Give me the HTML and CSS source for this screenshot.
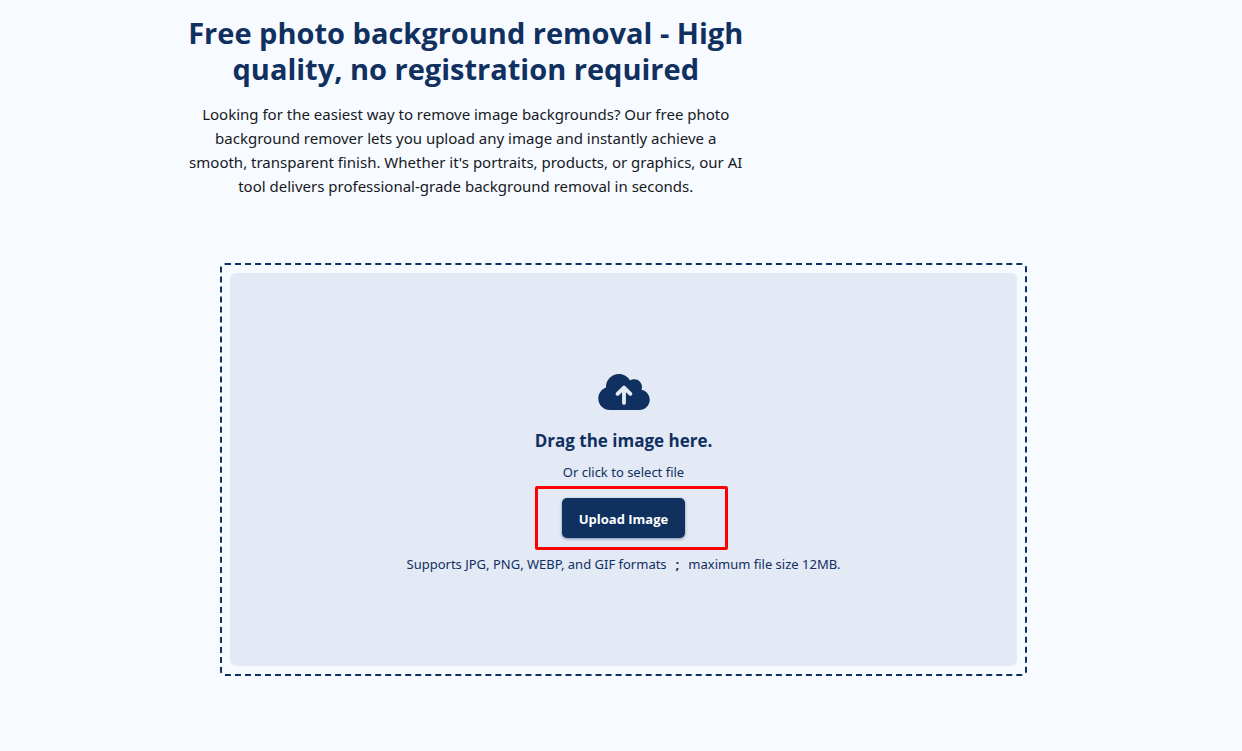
FILE: index.html
```html
<!DOCTYPE html>
<html lang="en">
<head>
    <meta charset="UTF-8">
    <meta name="viewport" content="width=device-width, initial-scale=1.0">
    <title>Free photo background removal</title>
    <link rel="stylesheet" href="styles.css">
</head>
<body>
    <header class="intro">
        <h1>Free photo background removal - High quality, no registration required</h1>
        <p>Looking for the easiest way to remove image backgrounds? Our free photo background remover lets you upload any image and instantly achieve a smooth, transparent finish. Whether it's portraits, products, or graphics, our AI tool delivers professional-grade background removal in seconds.</p>
    </header>

    <main class="upload">
        <div class="drop-border">
            <div class="drop-area">
                <svg class="cloud-icon" viewBox="0 32 640 448" aria-hidden="true">
                    <path fill="currentColor" d="M144 480C64.500 480 0 415.500 0 336c0-62.800 40.200-116.200 96.200-135.900c-.1-2.700-.2-5.400-.2-8.100c0-88.400 71.600-160 160-160c59.300 0 111 32.200 138.700 80.200C409.900 102 428.300 96 448 96c53 0 96 43 96 96c0 12.200-2.300 23.800-6.400 34.600C596 238.400 640 290.100 640 352c0 70.700-57.300 128-128 128H144zm79-217c-9.400 9.400-9.400 24.600 0 33.900s24.600 9.400 33.900 0l39-39V392c0 13.300 10.700 24 24 24s24-10.700 24-24V257.900l39 39c9.400 9.400 24.600 9.400 33.900 0s9.400-24.600 0-33.900l-80-80c-9.400-9.400-24.600-9.400-33.900 0l-80 80z"/>
                </svg>
                <h2>Drag the image here.</h2>
                <p class="hint">Or click to select file</p>
                <div class="button-row">
                    <button type="button" class="upload-button">Upload Image</button>
                    <span class="highlight"></span>
                </div>
                <p class="formats">Supports JPG, PNG, WEBP, and GIF formats<b>;</b>maximum file size 12MB.</p>
            </div>
        </div>
    </main>
</body>
</html>
```
FILE: styles.css
```css
* {
    box-sizing: border-box;
}

body {
    margin: 0;
    background-color: #f7faff;
    color: #16191d;
    font-family: "Segoe UI", "Open Sans", "Noto Sans", sans-serif;
}

h1, h2, p {
    margin: 0;
}

.intro {
    width: 45%;
    margin-left: 15%;
    padding-top: 15px;
    text-align: center;
}

.intro h1 {
    color: #10305f;
    font-size: 29px;
    line-height: 36px;
    font-weight: 700;
    margin-bottom: 15px;
}

.intro p {
    font-size: 15px;
    line-height: 24px;
}

.intro p,
.hint,
.formats {
    font-family: "Segoe UI", "Noto Sans", sans-serif;
}

.upload {
    padding: 65px 215px 75px 220px;
}

.drop-border {
    border: 2px dashed #10305f;
    border-radius: 5px;
    padding: 8px;
}

.drop-area {
    display: flex;
    flex-direction: column;
    align-items: center;
    background-color: #e3e9f5;
    border-radius: 6px;
    padding: 101px 16px 92px;
    color: #10305f;
    text-align: center;
}

.cloud-icon {
    width: 52px;
    height: 36px;
    margin-bottom: 19px;
}

.drop-area h2 {
    font-size: 17px;
    line-height: 24px;
    font-weight: 700;
    margin-bottom: 9px;
}

.hint,
.formats {
    font-size: 13px;
    line-height: 20px;
}

.button-row {
    position: relative;
    margin: 16px 0;
}

.upload-button {
    display: block;
    height: 40px;
    padding: 2px 17px 0;
    border: 0;
    border-radius: 5px;
    background-color: #10305f;
    box-shadow: 0 1px 3px rgba(16, 48, 95, 0.5);
    color: #fff;
    font-family: inherit;
    font-size: 13px;
    font-weight: 700;
    cursor: pointer;
}

/* red frame around the upload button */
.highlight {
    position: absolute;
    top: -12px;
    right: -43px;
    bottom: -12px;
    left: -27px;
    border: 3px solid #fe0000;
    border-radius: 2px;
    pointer-events: none;
}

.formats b {
    margin: 0 9px;
}
```
